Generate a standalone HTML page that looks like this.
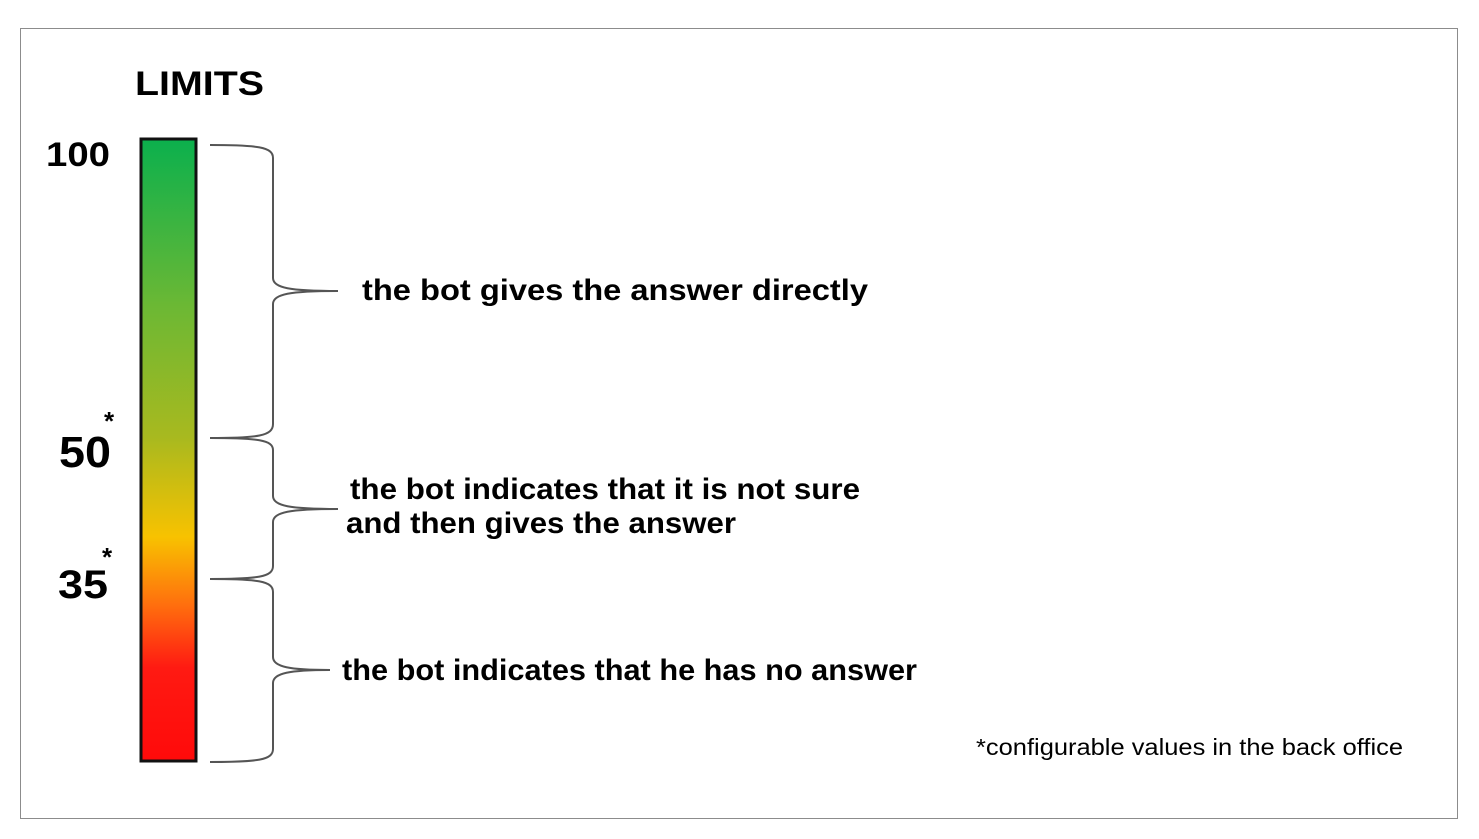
<!DOCTYPE html>
<html><head><style>body{margin:0;background:#fff}svg{display:block}</style></head>
<body>
<svg width="1479" height="839" viewBox="0 0 1479 839" xmlns="http://www.w3.org/2000/svg" font-family="Liberation Sans, sans-serif">
<defs>
<linearGradient id="g" x1="0" y1="0" x2="0" y2="1">
<stop offset="0" stop-color="#0bb04d"/>
<stop offset="0.27" stop-color="#6cb834"/>
<stop offset="0.48" stop-color="#a8b91f"/>
<stop offset="0.64" stop-color="#f8c200"/>
<stop offset="0.75" stop-color="#ff6e0e"/>
<stop offset="0.85" stop-color="#ff1a12"/>
<stop offset="1" stop-color="#ff0a0a"/>
</linearGradient>
</defs>
<rect x="20.5" y="28.5" width="1437" height="790" fill="#fff" stroke="#8c8c8c" stroke-width="1"/>
<text x="135" y="95" font-size="34" font-weight="bold" textLength="129" lengthAdjust="spacingAndGlyphs">LIMITS</text>
<rect x="141" y="139" width="55" height="622" fill="url(#g)" stroke="#111" stroke-width="3"/>
<g fill="none" stroke="#555" stroke-width="2">
<path d="M210 145 C258 145 273 147 273 158 L273 278 C273 288 290 291 338 291 M338 291 C290 291 273 294 273 304 L273 424 C273 436 258 438 210 438"/>
<path d="M210 438 C258 438 273 440 273 450 L273 496 C273 506 290 509 338 509 M338 509 C290 509 273 512 273 522 L273 566 C273 577 258 579 210 579"/>
<path d="M210 579 C258 579 273 581 273 592 L273 657 C273 667 290 670 330 670 M330 670 C290 670 273 673 273 683 L273 749 C273 760 258 762 210 762"/>
</g>
<g font-weight="bold" fill="#000">
<text x="46" y="166" font-size="34" textLength="64" lengthAdjust="spacingAndGlyphs">100</text>
<text x="59" y="467" font-size="44" textLength="52" lengthAdjust="spacingAndGlyphs">50</text>
<text x="104" y="430" font-size="26">*</text>
<text x="58" y="598" font-size="40" textLength="50" lengthAdjust="spacingAndGlyphs">35</text>
<text x="102" y="566" font-size="26">*</text>
<text x="362" y="300" font-size="30" textLength="506" lengthAdjust="spacingAndGlyphs">the bot gives the answer directly</text>
<text x="350" y="499" font-size="30" textLength="510" lengthAdjust="spacingAndGlyphs">the bot indicates that it is not sure</text>
<text x="346" y="533" font-size="30" textLength="390" lengthAdjust="spacingAndGlyphs">and then gives the answer</text>
<text x="342" y="680" font-size="30" textLength="575" lengthAdjust="spacingAndGlyphs">the bot indicates that he has no answer</text>
</g>
<text x="976" y="755" font-size="23" textLength="427" lengthAdjust="spacingAndGlyphs">*configurable values in the back office</text>
</svg>
</body></html>
